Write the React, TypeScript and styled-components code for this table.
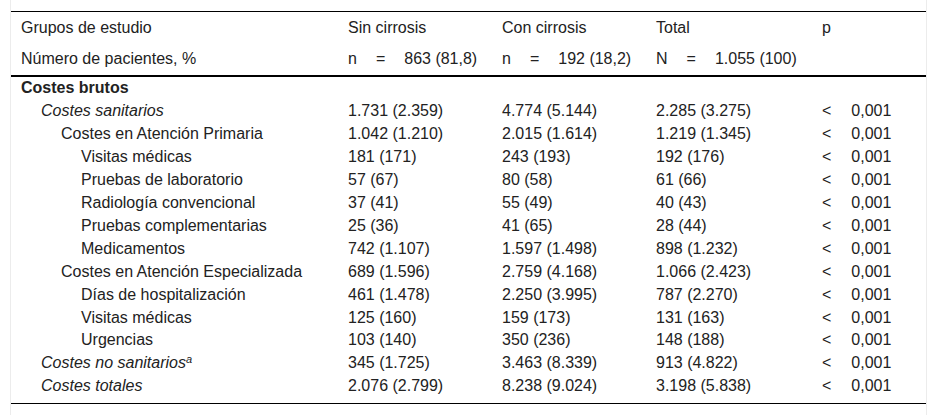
import styled, { createGlobalStyle } from "styled-components";

const GlobalStyle = createGlobalStyle`
  html, body {
    margin: 0;
    padding: 0;
    background: #fff;
  }
  body {
    font-family: "Liberation Sans", Arial, sans-serif;
    color: #222;
  }
`;

const Frame = styled.div`
  box-sizing: border-box;
  margin-left: 10px;
  width: 917px;
  height: 100vh;
  padding-top: 11px;
  border-left: 1px solid #ececec;
  border-right: 1px solid #ececec;
`;

const Table = styled.table`
  width: 915px;
  table-layout: fixed;
  border-collapse: collapse;
  font-size: 16px;
  line-height: 18px;
  border-top: 1px solid #000;
  border-bottom: 1px solid #000;
`;

const Head = styled.thead`
  border-bottom: 2px solid #000;
`;

const HeadCell = styled.td`
  padding: 6.75px 0 6.75px 10px;
  text-align: left;
  font-weight: normal;
  white-space: nowrap;
  vertical-align: middle;
`;

const BodyRow = styled.tr`
  &:last-child td {
    padding-bottom: 7.5px;
  }
`;

const Cell = styled.td<{ $level?: number; $bold?: boolean; $italic?: boolean }>`
  padding: 2.46px 0 2.46px ${(p) => 10 + (p.$level ?? 0) * 20}px;
  white-space: nowrap;
  vertical-align: top;
  font-weight: ${(p) => (p.$bold ? 700 : 400)};
  font-style: ${(p) => (p.$italic ? "italic" : "normal")};
`;

const Count = styled.span`
  display: inline-flex;
  gap: 19px;
`;

const PValue = styled.span`
  display: inline-flex;
  gap: 20px;
`;

const Sup = styled.sup`
  font-size: 11px;
  line-height: 0;
  vertical-align: 5px;
`;

type Row = {
  label: React.ReactNode;
  level: number;
  bold?: boolean;
  italic?: boolean;
  values?: [string, string, string];
};

const rows: Row[] = [
  { label: "Costes brutos", level: 0, bold: true },
  { label: "Costes sanitarios", level: 1, italic: true, values: ["1.731 (2.359)", "4.774 (5.144)", "2.285 (3.275)"] },
  { label: "Costes en Atención Primaria", level: 2, values: ["1.042 (1.210)", "2.015 (1.614)", "1.219 (1.345)"] },
  { label: "Visitas médicas", level: 3, values: ["181 (171)", "243 (193)", "192 (176)"] },
  { label: "Pruebas de laboratorio", level: 3, values: ["57 (67)", "80 (58)", "61 (66)"] },
  { label: "Radiología convencional", level: 3, values: ["37 (41)", "55 (49)", "40 (43)"] },
  { label: "Pruebas complementarias", level: 3, values: ["25 (36)", "41 (65)", "28 (44)"] },
  { label: "Medicamentos", level: 3, values: ["742 (1.107)", "1.597 (1.498)", "898 (1.232)"] },
  { label: "Costes en Atención Especializada", level: 2, values: ["689 (1.596)", "2.759 (4.168)", "1.066 (2.423)"] },
  { label: "Días de hospitalización", level: 3, values: ["461 (1.478)", "2.250 (3.995)", "787 (2.270)"] },
  { label: "Visitas médicas", level: 3, values: ["125 (160)", "159 (173)", "131 (163)"] },
  { label: "Urgencias", level: 3, values: ["103 (140)", "350 (236)", "148 (188)"] },
  {
    label: (
      <>
        Costes no sanitarios<Sup>a</Sup>
      </>
    ),
    level: 1,
    italic: true,
    values: ["345 (1.725)", "3.463 (8.339)", "913 (4.822)"],
  },
  { label: "Costes totales", level: 1, italic: true, values: ["2.076 (2.799)", "8.238 (9.024)", "3.198 (5.838)"] },
];

const counts: [string, string][] = [
  ["n", "863 (81,8)"],
  ["n", "192 (18,2)"],
  ["N", "1.055 (100)"],
];

const App = () => {
  return (
    <>
      <GlobalStyle />
      <Frame>
        <Table>
          <colgroup>
            <col style={{ width: 327 }} />
            <col style={{ width: 154 }} />
            <col style={{ width: 154 }} />
            <col style={{ width: 166 }} />
            <col style={{ width: 114 }} />
          </colgroup>
          <Head>
            <tr>
              <HeadCell>Grupos de estudio</HeadCell>
              <HeadCell>Sin cirrosis</HeadCell>
              <HeadCell>Con cirrosis</HeadCell>
              <HeadCell>Total</HeadCell>
              <HeadCell>p</HeadCell>
            </tr>
            <tr>
              <HeadCell>Número de pacientes, %</HeadCell>
              {counts.map(([sym, val]) => (
                <HeadCell key={val}>
                  <Count>
                    <span>{sym}</span>
                    <span>=</span>
                    <span>{val}</span>
                  </Count>
                </HeadCell>
              ))}
              <HeadCell />
            </tr>
          </Head>
          <tbody>
            {rows.map((r, i) => (
              <BodyRow key={i}>
                <Cell $level={r.level} $bold={r.bold} $italic={r.italic}>
                  {r.label}
                </Cell>
                {r.values ? (
                  <>
                    {r.values.map((v, j) => (
                      <Cell key={j}>{v}</Cell>
                    ))}
                    <Cell>
                      <PValue>
                        <span>&lt;</span>
                        <span>0,001</span>
                      </PValue>
                    </Cell>
                  </>
                ) : (
                  <>
                    <Cell />
                    <Cell />
                    <Cell />
                    <Cell />
                  </>
                )}
              </BodyRow>
            ))}
          </tbody>
        </Table>
      </Frame>
    </>
  );
};

export default App;
